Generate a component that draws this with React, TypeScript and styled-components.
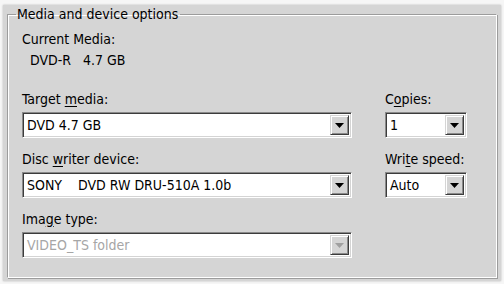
import React from "react";
import styled, { createGlobalStyle } from "styled-components";

const GlobalStyle = createGlobalStyle`
  html, body { margin: 0; padding: 0; background: #f6f6f6; }
  body {
    font-family: "DejaVu Sans Condensed", "DejaVu Sans", sans-serif;
    font-size: 14px;
    color: #000;
  }
`;

const Window = styled.div`
  margin: 5px 3px 3px 3px;
  height: 276px;
  box-sizing: border-box;
  background: #d5d5d5;
  box-shadow: 0 0 2px rgba(0, 0, 0, 0.25);
  padding: 1px 4px 0 4px;
`;

const Group = styled.fieldset`
  margin: 0;
  height: 272px;
  box-sizing: border-box;
  border-style: solid;
  border-width: 1px;
  border-color: #9c9c9c #ffffff #ffffff #9c9c9c;
  box-shadow: inset 1px 1px 0 #ffffff, 1px 1px 0 #9c9c9c;
  padding: 9px 28px 0 14px;
`;

const Legend = styled.legend`
  padding: 0 2px 0 1px;
  margin-left: -6px;
  line-height: 16px;
`;

const Text = styled.div<{ $indent?: number; $mt?: number }>`
  line-height: 16px;
  padding-left: ${(p) => p.$indent ?? 0}px;
  margin-top: ${(p) => p.$mt ?? 0}px;
  white-space: pre;
`;

const Grid = styled.div`
  display: grid;
  grid-template-columns: 330px 82px;
  column-gap: 33px;
  margin-top: 23px;
`;

const Field = styled.div<{ $mt?: number }>`
  display: flex;
  flex-direction: column;
  gap: 5px;
  margin-top: ${(p) => p.$mt ?? 0}px;
`;

const Label = styled.div`
  line-height: 16px;
  white-space: pre;
`;

const Key = styled.span`
  text-decoration: underline;
  text-underline-offset: 2px;
`;

const Combo = styled.div<{ $disabled?: boolean }>`
  display: flex;
  align-items: stretch;
  height: 26px;
  box-sizing: border-box;
  background: #ffffff;
  border: 1px solid;
  border-color: #8a8a8a #ffffff #ffffff #8a8a8a;
  box-shadow: inset 1px 1px 0 #3c3c3c, inset -1px -1px 0 #d4d4d4;
  padding: 2px;
  color: ${(p) => (p.$disabled ? "#a6a6a6" : "#000")};
`;

const Value = styled.div`
  flex: 1;
  display: flex;
  align-items: center;
  padding-left: 2px;
  white-space: pre;
  overflow: hidden;
`;

const Button = styled.div<{ $disabled?: boolean }>`
  width: 19px;
  box-sizing: border-box;
  background: #d5d5d5;
  border: 1px solid;
  border-color: #d5d5d5 #3c3c3c #3c3c3c #d5d5d5;
  box-shadow: inset 1px 1px 0 #ffffff, inset -1px -1px 0 #8a8a8a;
  display: flex;
  align-items: center;
  justify-content: center;
  color: ${(p) => (p.$disabled ? "#a0a0a0" : "#000")};
  svg { display: block; }
`;

const Arrow = () => (
  <svg width="9" height="5" viewBox="0 0 9 5">
    <path d="M0 0 H9 L4.5 5 Z" fill="currentColor" />
  </svg>
);

function ComboBox({ value, disabled }: { value: string; disabled?: boolean }) {
  return (
    <Combo $disabled={disabled}>
      <Value>{value}</Value>
      <Button $disabled={disabled}>
        <Arrow />
      </Button>
    </Combo>
  );
}

export default function App() {
  return (
    <>
      <GlobalStyle />
      <Window>
        <Group>
          <Legend>Media and device options</Legend>
          <Text>Current Media:</Text>
          <Text $indent={8} $mt={5}>{"DVD-R   4.7 GB"}</Text>
          <Grid>
            <Field>
              <Label>
                Target <Key>m</Key>edia:
              </Label>
              <ComboBox value="DVD 4.7 GB" />
            </Field>
            <Field>
              <Label>
                C<Key>o</Key>pies:
              </Label>
              <ComboBox value="1" />
            </Field>
            <Field $mt={13}>
              <Label>
                Disc <Key>w</Key>riter device:
              </Label>
              <ComboBox value={"SONY    DVD RW DRU-510A 1.0b"} />
            </Field>
            <Field $mt={13}>
              <Label>
                Wri<Key>t</Key>e speed:
              </Label>
              <ComboBox value="Auto" />
            </Field>
            <Field $mt={13}>
              <Label>
                Ima<Key>g</Key>e type:
              </Label>
              <ComboBox value="VIDEO_TS folder" disabled />
            </Field>
          </Grid>
        </Group>
      </Window>
    </>
  );
}
